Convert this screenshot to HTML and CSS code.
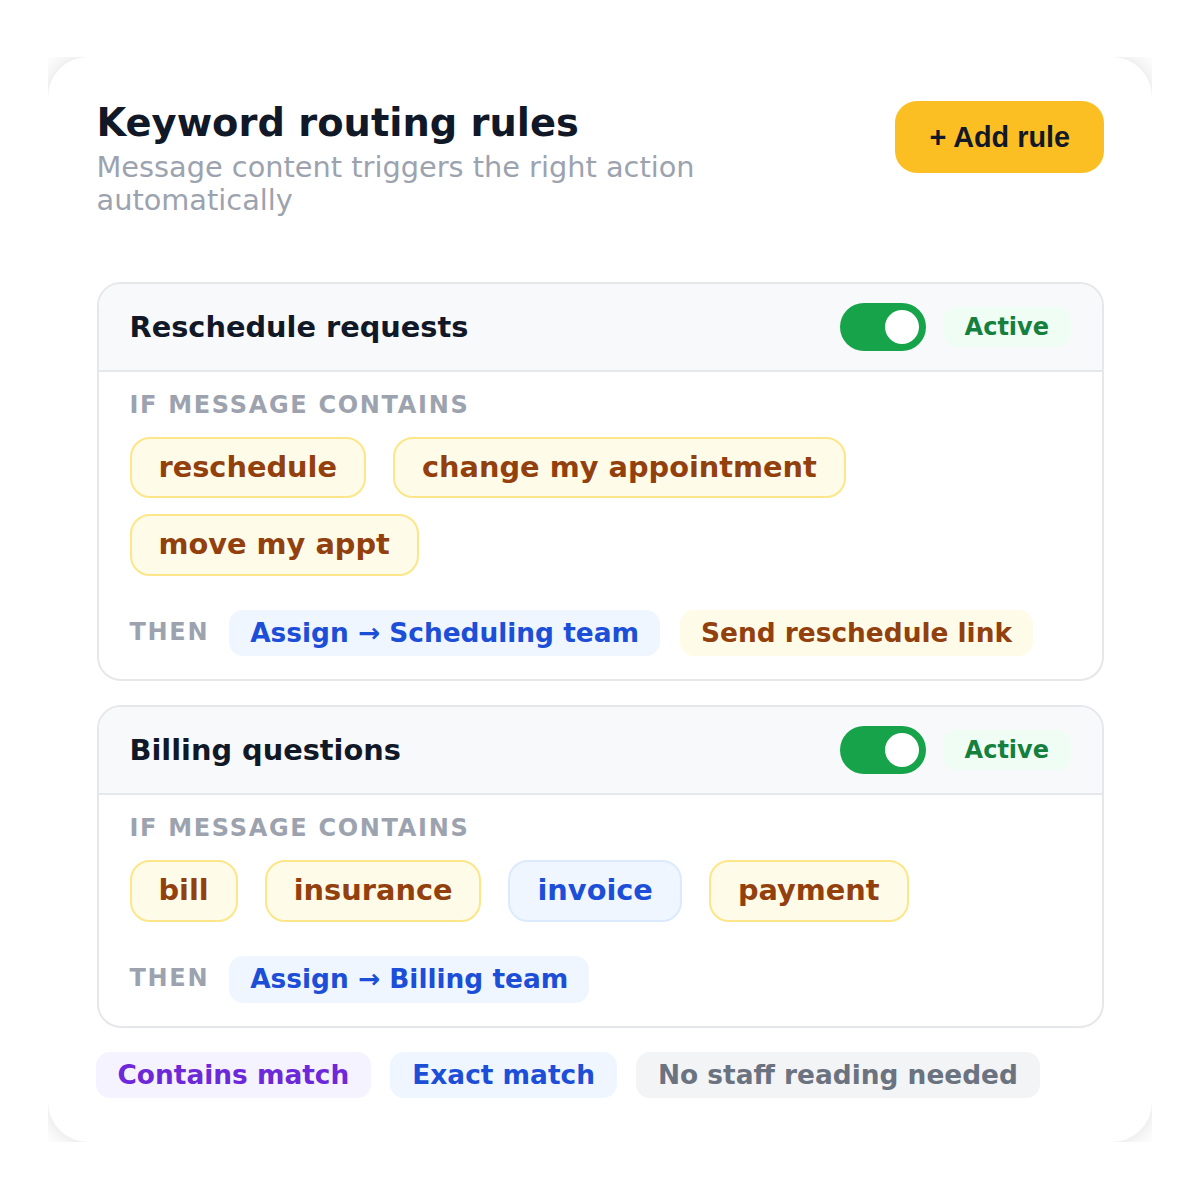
FILE: index.html
```html
<!DOCTYPE html>
<html>
<head>
<meta charset="utf-8">
<link rel="stylesheet" href="styles.css">
</head>
<body>
<div class="frame">
  <div class="panel">
    <div class="panel-head">
      <div class="head-text">
        <h1 class="title">Keyword routing rules</h1>
        <p class="subtitle">Message content triggers the right action automatically</p>
      </div>
      <button class="add-btn">+ Add rule</button>
    </div>

    <div class="rules">
      <section class="rule">
        <div class="rule-head">
          <h2 class="rule-title">Reschedule requests</h2>
          <div class="rule-status">
            <span class="toggle"><span class="knob"></span></span>
            <span class="status-pill">Active</span>
          </div>
        </div>
        <div class="rule-body">
          <div class="label">IF MESSAGE CONTAINS</div>
          <div class="chips">
            <span class="chip">reschedule</span>
            <span class="chip">change my appointment</span>
            <span class="chip">move my appt</span>
          </div>
          <div class="then-row">
            <span class="label">THEN</span>
            <span class="action action-blue">Assign → Scheduling team</span>
            <span class="action action-yellow">Send reschedule link</span>
          </div>
        </div>
      </section>

      <section class="rule">
        <div class="rule-head">
          <h2 class="rule-title">Billing questions</h2>
          <div class="rule-status">
            <span class="toggle"><span class="knob"></span></span>
            <span class="status-pill">Active</span>
          </div>
        </div>
        <div class="rule-body">
          <div class="label">IF MESSAGE CONTAINS</div>
          <div class="chips">
            <span class="chip">bill</span>
            <span class="chip">insurance</span>
            <span class="chip chip-blue">invoice</span>
            <span class="chip">payment</span>
          </div>
          <div class="then-row">
            <span class="label">THEN</span>
            <span class="action action-blue">Assign → Billing team</span>
          </div>
        </div>
      </section>
    </div>

    <div class="tags">
      <span class="tag tag-purple">Contains match</span>
      <span class="tag tag-blue">Exact match</span>
      <span class="tag tag-gray">No staff reading needed</span>
    </div>
  </div>
</div>
</body>
</html>
```

FILE: styles.css
```css
* { box-sizing: border-box; }

html, body {
  margin: 0;
  padding: 0;
  background: #ffffff;
}

body {
  font-family: "DejaVu Sans", sans-serif;
  color: #111827;
}

.frame {
  margin: 57px 48px 0 48px;
  height: 1085px;
  overflow: hidden;
  background: #ffffff;
}

.panel {
  background: #ffffff;
  border-radius: 40px;
  box-shadow: 0 0 24px rgba(0, 0, 0, 0.14);
  padding: 44px 48px 43px 48.5px;
  height: 1085px;
}

.panel-head {
  display: flex;
  justify-content: space-between;
  align-items: flex-start;
  margin-bottom: 64px;
}

.head-text {
  max-width: 680px;
}

.title {
  margin: 0;
  font-size: 38.4px;
  font-weight: 700;
  color: #111827;
  line-height: 1.164;
}

.subtitle {
  margin: 5px 0 0 0;
  font-size: 28.8px;
  color: #9ca3af;
  line-height: 1.164;
}

.add-btn {
  font-family: "Liberation Sans", Arial, sans-serif;
  font-size: 28.8px;
  font-weight: 700;
  color: #111827;
  background: #fbbf24;
  border: none;
  border-radius: 22px;
  padding: 19.5px 34px;
  line-height: 1.15;
}

.rules {
  display: flex;
  flex-direction: column;
  gap: 24px;
}

.rule {
  border: 2px solid #e5e7eb;
  border-radius: 24px;
  overflow: hidden;
  background: #ffffff;
}

.rule-head {
  display: flex;
  justify-content: space-between;
  align-items: center;
  padding: 19px 31px;
  background: #f8f9fb;
  border-bottom: 2px solid #e5e7eb;
}

.rule-title {
  margin: 0;
  font-size: 28.8px;
  font-weight: 700;
  color: #111827;
}

.rule-status {
  display: flex;
  align-items: center;
  gap: 17px;
}

.toggle {
  display: flex;
  align-items: center;
  justify-content: flex-end;
  width: 86px;
  height: 48px;
  border-radius: 24px;
  background: #16a34a;
  padding: 0 7px;
}

.knob {
  width: 34px;
  height: 34px;
  border-radius: 50%;
  background: #ffffff;
}

.status-pill {
  font-size: 24px;
  font-weight: 700;
  color: #15803d;
  background: #f0fdf4;
  border-radius: 14px;
  padding: 6px 22px;
}

.rule-body {
  padding: 20px 31px 23px 31px;
}

.label {
  font-size: 24px;
  font-weight: 700;
  letter-spacing: 0.07em;
  color: #9ca3af;
  line-height: 1.164;
}

.chips {
  display: flex;
  flex-wrap: wrap;
  gap: 16px 27px;
  margin-top: 17px;
}

.chip {
  font-size: 28.8px;
  font-weight: 700;
  color: #92400e;
  background: #fefbe8;
  border: 2px solid #fde68a;
  border-radius: 20px;
  padding: 12px 27px;
  line-height: 1.164;
}

.chip-blue {
  color: #1d4ed8;
  background: #eff6ff;
  border-color: #dbeafe;
}

.then-row {
  display: flex;
  align-items: center;
  gap: 20px;
  margin-top: 34px;
}

.action {
  font-size: 26.4px;
  font-weight: 700;
  border-radius: 14px;
  padding: 8px 21px;
  line-height: 1.164;
}

.action-blue {
  color: #1d4ed8;
  background: #eff6ff;
}

.action-yellow {
  color: #92400e;
  background: #fefce8;
}

.tags {
  display: flex;
  gap: 19px;
  margin-top: 24px;
  margin-left: -1px;
}

.tag {
  font-size: 26.4px;
  font-weight: 700;
  border-radius: 14px;
  padding: 8px 22px;
  line-height: 1.164;
}

.tag-purple {
  color: #6d28d9;
  background: #f5f3ff;
}

.tag-blue {
  color: #1d4ed8;
  background: #eff6ff;
}

.tag-gray {
  color: #6b7280;
  background: #f3f4f6;
}
```
